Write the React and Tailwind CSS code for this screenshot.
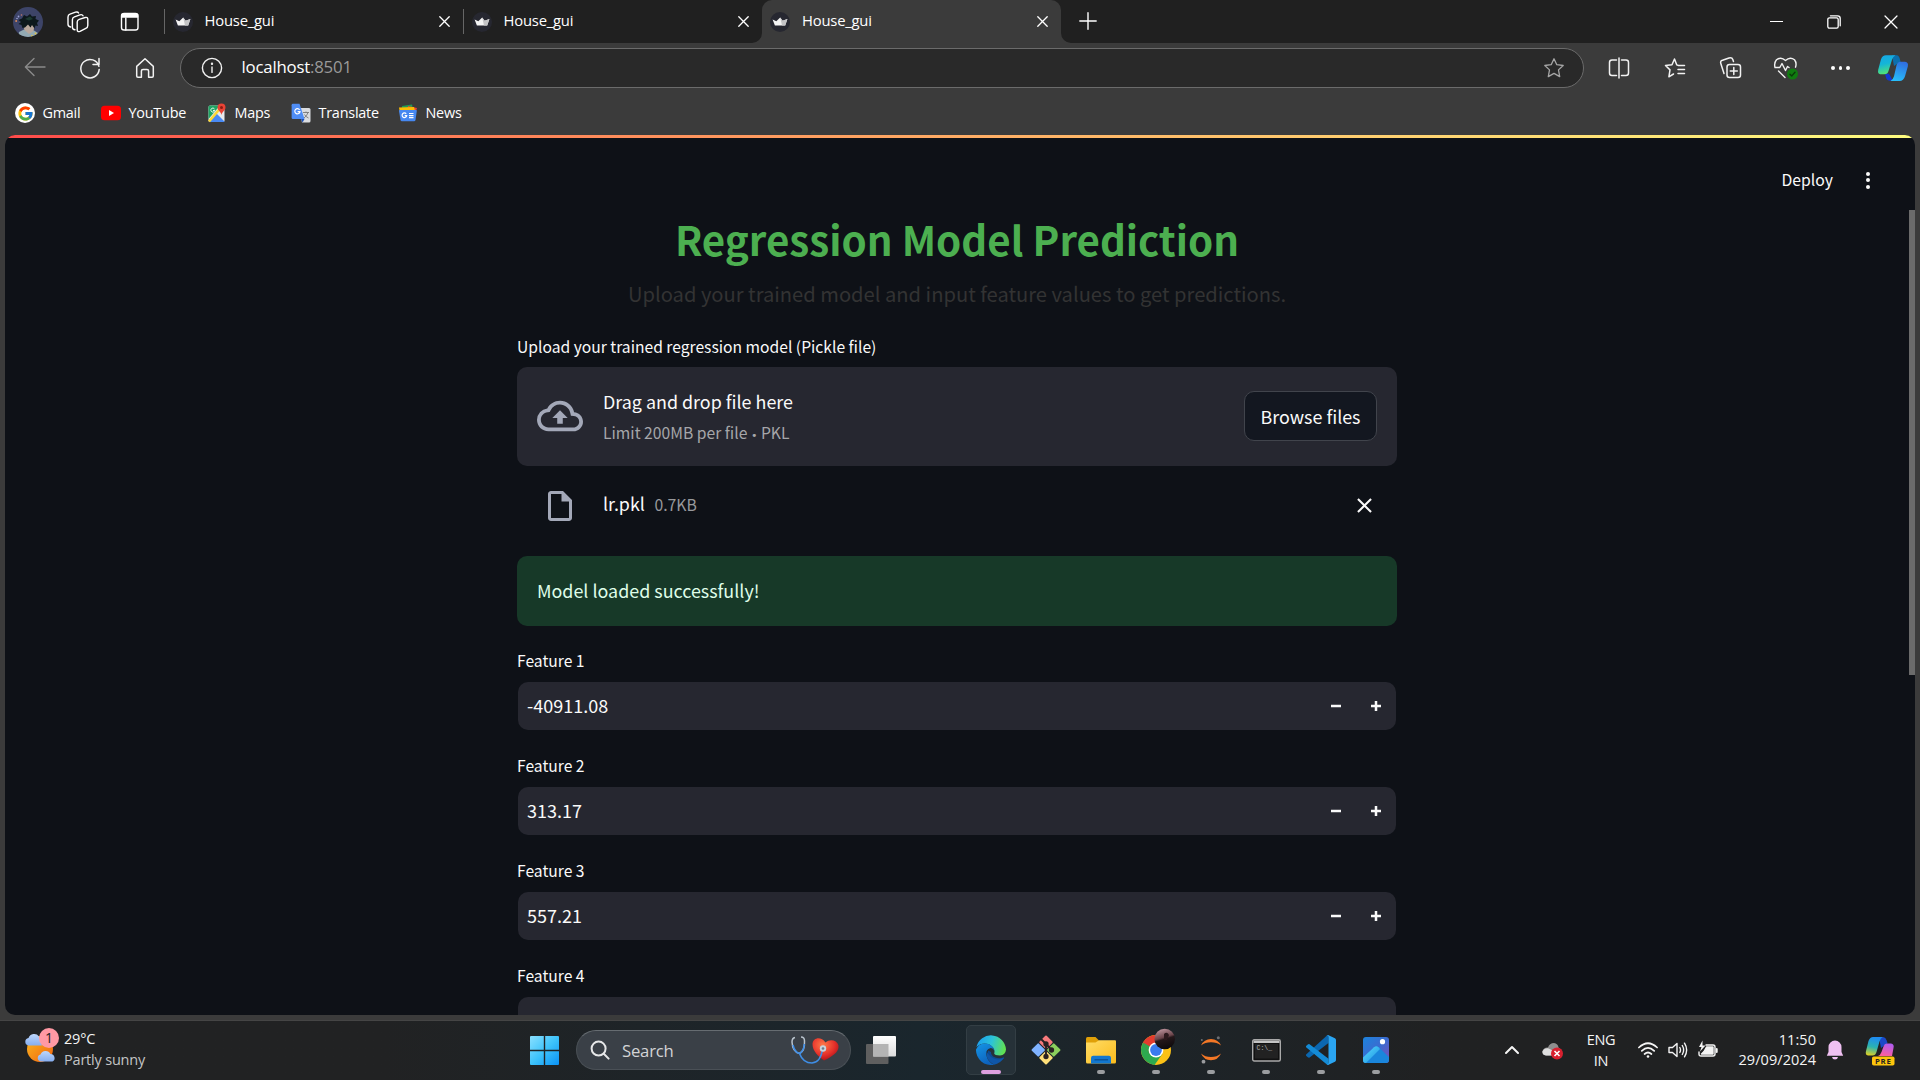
import { FcGoogle } from "react-icons/fc";

const UI = "font-['Open_Sans','Noto_Sans',sans-serif]";
const BODY = "font-['Noto_Sans_CJK_SC','Noto_Sans',sans-serif]";

const M = ({ className = "", children }) => <span className={`whitespace-nowrap ${className}`}>{children}</span>;

function Line({ size = 24, w = 1.3, children, className = "", box = "0 0 24 24" }) {
  return (
    <svg width={size} height={size} viewBox={box} fill="none" stroke="currentColor" strokeWidth={w} strokeLinecap="round" strokeLinejoin="round" className={`shrink-0 ${className}`}>
      {children}
    </svg>
  );
}

function Avatar() {
  return (
    <svg width="30" height="30" viewBox="0 0 30 30" className="shrink-0">
      <defs><clipPath id="av"><circle cx="15" cy="15" r="15" /></clipPath></defs>
      <g clipPath="url(#av)">
        <rect width="30" height="30" fill="#3d4468" />
        <path d="M5 30 6 25 11 22.500 21 23.500 25 26 26 30Z" fill="#93aab3" />
        <path d="M9.500 16 22 16 20.500 24 16 27 11.500 23Z" fill="#b9a89d" />
        <path d="M5.500 17 8 15 5.500 13 9 11.500 11 8 14 9.500 17 7 19 9.500 23 9 22.500 12 26 13.500 24 16 25 19 22.500 18.500 21.500 21.500 19 18 17.500 20.500 15 17.500 12 20.500 9.500 21 8.500 18Z" fill="#0d181c" />
        <path d="M12 12 17 9.500 20 12 16 13.500Z" fill="#1c3a31" />
        <circle cx="5.500" cy="9.500" r=".900" fill="#9aa0d6" /><circle cx="8.500" cy="8" r=".800" fill="#c07a6b" /><circle cx="3.200" cy="14" r="1" fill="#d88a5b" /><circle cx="4" cy="11.500" r=".700" fill="#b7bdf0" /><circle cx="22.500" cy="26.500" r=".900" fill="#e0c040" /><circle cx="19" cy="29" r=".900" fill="#e0c040" />
      </g>
    </svg>
  );
}

function Crown() {
  return (
    <svg width="20" height="20" viewBox="0 0 20 20" className="shrink-0">
      <circle cx="10" cy="10" r="10" fill="#262730" />
      <path d="M2.600 7.400 6.300 9.300 10.200 5.400 12.600 8.800 17.400 7 15.200 13.400H4.900Z" fill="#f4f4f4" />
      <path d="M10.200 5.400 12.600 8.800 17.400 7 15.200 13.400H12Z" fill="#c4c4c6" />
    </svg>
  );
}

const Cross = ({ size = 11, w = 1.3 }) => (
  <Line size={size} w={w} box="0 0 11 11"><path d="M.8.8 10.2 10.2M10.2.8.8 10.2" /></Line>
);

function Tab({ active, sep }) {
  return (
    <div className={`relative flex h-[43px] w-[299px] items-center ${active ? "rounded-t-[10px] bg-[#3b3b3b] pl-[8px] pr-[13px]" : "pl-[9.500px] pr-[12px]"}`}>
      {sep && <span className="absolute left-[1px] top-[9px] h-[25px] w-px bg-[#666]" />}
      {active && (
        <>
          <svg width="10" height="10" className="absolute -left-[10px] bottom-0"><path d="M10 0A10 10 0 0 1 0 10H10Z" fill="#3b3b3b" /></svg>
          <svg width="10" height="10" className="absolute -right-[10px] bottom-0"><path d="M0 0A10 10 0 0 0 10 10H0Z" fill="#3b3b3b" /></svg>
        </>
      )}
      <Crown />
      <M className="-mt-[4px] ml-[12px] text-[14.800px] leading-[20px] tracking-[-0.200px]">House_gui</M>
      <span className="ml-auto"><Cross /></span>
    </div>
  );
}

function TitleBar() {
  return (
    <div className="flex h-[43px] items-center bg-[#202020] text-white">
      <div className="flex w-[163px] items-center pl-[13px]">
        <Avatar />
        <Line size={22} w={1.4} box="0 0 22 22" className="ml-[24px]">
          <path d="M12.200 8.400 18.200 6.500Q20.800 5.900 20.800 8.300V14.500Q20.800 16.600 18.800 17.400L13 20.300Q10.200 21.300 10.200 18.700V11Q10.200 9 12.200 8.400ZM8 18.800Q5.400 18.600 5.400 16.200V8.700Q5.400 6.500 7.400 5.800L13 3.800Q15.300 3.100 16 4.800M3.600 16Q1 15.600 1 13.300V6Q1 3.900 3 3.200L8.500 1.200Q10.800.500 11.600 2" />
        </Line>
        <Line size={22} w={1.400} box="0 0 22 22" className="ml-[30px]">
          <rect x="2.500" y="2.500" width="16.500" height="16.500" rx="2.600" /><path d="M6.800 7V19" /><path d="M3 3.500H18.500V6H3Z" fill="currentColor" />
        </Line>
      </div>
      <Tab sep />
      <Tab sep />
      <span className="w-px" />
      <Tab active />
      <Line size={18} w={1.4} box="0 0 18 18" className="-mt-px ml-[18px]"><path d="M9 .8V17.2M.8 9H17.2" /></Line>
      <div className="ml-auto flex items-center">
        <div className="flex w-[57.500px] justify-center"><span className="h-px w-[13px] bg-white" /></div>
        <div className="flex w-[57.500px] justify-center">
          <Line size={14} w={1.3} box="0 0 14 14"><rect x=".8" y="2.800" width="10.400" height="10.400" rx="1.600" /><path d="M3.400.8H10.600Q13.200.8 13.200 3.400V10.800" /></Line>
        </div>
        <div className="flex w-[57.500px] justify-center"><Cross size={14} w={1} /></div>
      </div>
    </div>
  );
}

const Cell = ({ children, className = "w-[55px]" }) => <div className={`flex shrink-0 items-center justify-center ${className}`}>{children}</div>;

function CopilotEdge() {
  return (
    <svg width="32" height="34" viewBox="0 0 32 28" preserveAspectRatio="none" className="shrink-0">
      <defs>
        <linearGradient id="ca" x1="0" y1="0" x2=".2" y2="1"><stop offset="0" stopColor="#17a6e6" /><stop offset=".5" stopColor="#14b5d8" /><stop offset="1" stopColor="#4fe07a" /></linearGradient>
        <linearGradient id="cb" x1=".6" y1="0" x2=".3" y2="1"><stop offset="0" stopColor="#2f6fe0" /><stop offset="1" stopColor="#27c0fb" /></linearGradient>
      </defs>
      <g transform="translate(0 2.800) scale(1 .8)">
        <path d="M15 1H20Q22.500 1.500 23.500 7.500L17 12Z" fill="#0b6fae" />
        <path d="M8 20H12L16 27H13Q10 27 9 24Z" fill="#1238cf" />
        <path d="M9 .8H18.500Q16 1.800 15 5.500L11.500 17Q10.600 20.300 7.500 20.400H3.200Q.4 20.200 1.200 15.800L4 5Q5.400.8 9 .8Z" fill="url(#ca)" />
        <path d="M22.800 7.600H28Q31.800 8 30.800 12.500L28 22.500Q26.600 27.200 22.500 27.400H13.500Q16 26 17 22.500L19.600 11Q20.400 7.800 22.800 7.600Z" fill="url(#cb)" />
      </g>
    </svg>
  );
}

function Toolbar() {
  return (
    <div className="flex h-[50px] items-center bg-[#3b3b3b] pl-[7.500px] text-[#f2f2f2]">
      <Cell className="-mt-[2px] w-[55px] text-[#8a8a8a]"><Line size={22} w={1.4} box="0 0 22 22"><path d="M21 11H1.500M10 2.400 1.400 11 10 19.600" /></Line></Cell>
      <Cell className="-mt-px w-[55px]"><Line size={22} w={1.5} box="0 0 22 22"><path d="M19.900 9.200A9.200 9.200 0 1 0 20.200 12.400M20 1.600V7.400H14" /></Line></Cell>
      <Cell className="-mt-px w-[55px]"><Line size={22} w={1.5} box="0 0 22 22"><path d="M2.700 9.400 11 1.800 19.300 9.400V19Q19.300 20.200 18.100 20.200H14.600V14Q14.600 12.400 13 12.400H9Q7.400 12.400 7.400 14V20.200H3.900Q2.700 20.200 2.700 19Z" /></Line></Cell>
      <div className="ml-[7.500px] flex h-[40px] w-[1404px] shrink-0 items-center rounded-full border border-[#6b6b6b] bg-[#292929] pl-[20px] pr-[18px]">
        <Line size={22} w={1.4} box="0 0 22 22"><circle cx="11" cy="11" r="9.600" /><path d="M11 10V15.400" /><circle cx="11" cy="6.800" r=".5" fill="currentColor" /></Line>
        <M className="-mt-[2px] ml-[18.500px] text-[16.800px] leading-[22px] tracking-[-0.200px] text-white">localhost</M>
        <M className="-mt-[2px] text-[16.800px] leading-[22px] tracking-[-0.200px] text-[#9a9a9a]">:8501</M>
        <Line size={22} w={1.3} box="0 0 22 22" className="ml-auto text-[#a6a6a6]"><path d="M11 1.800 13.800 7.700 20.200 8.500 15.500 12.900 16.700 19.600 11 16.400 5.300 19.600 6.500 12.900 1.800 8.500 8.200 7.700Z" /></Line>
      </div>
      <div className="ml-[7.500px] flex items-center">
        <Cell><Line size={22} w={1.5} box="0 0 22 22"><path d="M8.500 3H4Q1.500 3 1.500 5.500V16Q1.500 18.500 4 18.500H8.500M13.500 3H18Q20.500 3 20.500 5.500V16Q20.500 18.500 18 18.500H13.500M11 1V21" /></Line></Cell>
        <Cell className="w-[56px]"><Line size={22} w={1.5} box="0 0 22 22"><path d="M20.500 8.500H14.500L12.800 7.900 10.500 2 8 7.700 1.500 8.500 6 12.900 4.900 19.800 9.500 17M14 12.500H20.500M14 16.500H20.500" /></Line></Cell>
        <Cell><Line size={24} w={1.5} box="0 0 24 24"><rect x="9" y="8.500" width="13.500" height="13" rx="2.500" /><path d="M15.800 11.500V18.500M12.300 15H19.300M6 17.500 2.800 7.500Q2 5 4.500 4.300L11 2Q14 1.200 14.800 3.500L15.500 5.500" /></Line></Cell>
        <Cell className="w-[56px]">
          <Line size={26} w={1.4} box="0 0 26 26"><path d="M2 12.500Q.800 8 3.500 4.800 8 1.200 12.500 5.500 17 1.200 21.500 4.800 24 8 22.500 12.200M2.500 12.500H6.800L9 8.500 12.500 15.500 14.500 11.500 16 12.500M5.500 16 12 22.500" /><circle cx="19.500" cy="19" r="5.500" fill="#107c10" stroke="none" /><path d="M17 19.200 18.800 20.900 22 17.300" stroke="#0a3a0a" /></Line>
        </Cell>
        <Cell className="w-[54px] gap-[4px]">{[0, 1, 2].map((i) => <span key={i} className="size-[3.400px] rounded-full bg-white" />)}</Cell>
        <Cell className="w-[51px]"><CopilotEdge /></Cell>
      </div>
    </div>
  );
}

const YT = () => <svg width="20" height="16" viewBox="0 0 20 16"><rect y=".800" width="20" height="14.400" rx="3.500" fill="#f00" /><path d="M8 5V11L13 8Z" fill="#fff" /></svg>;
const MapsIcon = () => (
  <svg width="18" height="20" viewBox="0 0 18 20">
    <rect x=".500" y="2.500" width="16" height="16.500" rx="1.500" fill="#e8eaed" />
    <path d="M.500 4Q.500 2.500 2 2.500H12L.500 16Z" fill="#1fa463" />
    <path d="M1 18 8.500 10.500 16.500 18.500Q16 19 15 19H2Q1 19 1 18Z" fill="#4889f4" />
    <path d="M1 18.500 12.500 5" stroke="#fdd835" strokeWidth="2.600" />
    <path d="M13.500 .500A4 4 0 0 1 17.500 4.500C17.500 7.500 14 8.500 13.500 12 13 8.500 9.500 7.500 9.500 4.500A4 4 0 0 1 13.500 .500Z" fill="#ea4335" /><circle cx="13.500" cy="4.500" r="1.500" fill="#8c1d14" />
    <path d="M6.500 6A2 2 0 1 0 6.800 7.500H5" stroke="#fff" fill="none" strokeWidth=".900" />
  </svg>
);
const TranslateIcon = () => (
  <svg width="20" height="20" viewBox="0 0 20 20">
    <path d="M8 5H18Q19.500 5 19.500 6.500V18Q19.500 19.500 18 19.500H11Z" fill="#dadce0" />
    <path d="M12 9.500H18M15 8.500V9.500M17 9.500Q16 13 13 15M13.500 11.500Q15 14 17.500 15" stroke="#777" fill="none" strokeWidth=".900" />
    <path d="M2 .800H8.500L13.500 16H2Q.600 16 .600 14.500V2.200Q.600.800 2 .800Z" fill="#4f8df5" /><path d="M10 16H13.500L11.500 19.500Z" fill="#1a4fb8" />
    <path d="M8.600 6.800A2.600 2.600 0 1 0 9 8.600H6.600" stroke="#fff" fill="none" strokeWidth="1.200" />
  </svg>
);
const NewsIcon = () => (
  <svg width="20" height="18" viewBox="0 0 20 18">
    <path d="M4 2 14 .500 15.500 8H4Z" fill="#1e9e55" /><path d="M10 2 19 4 17.500 9H9Z" fill="#ea4335" /><path d="M1 3.500 16 3 17.500 9H2Z" fill="#fbbc04" />
    <path d="M1.500 6H18Q19 6 18.800 7L17.500 16Q17.300 17.200 16 17.200H4Q2.700 17.200 2.500 16L1 7Q1 6 1.500 6Z" fill="#4688f1" />
    <path d="M8.200 9.800A2.300 2.300 0 1 0 8.700 11.600H6.700M11 9.500H15.500M11 11.600H15.500M11 13.700H15.500" stroke="#fff" fill="none" strokeWidth="1.200" />
  </svg>
);
const Gmail = () => <span className="grid size-[20px] place-items-center rounded-full bg-white"><FcGoogle size={17} /></span>;

function Bookmarks() {
  const items = [
    [Gmail, "Gmail", "w-[86px]"],
    [YT, "YouTube", "w-[106px]"],
    [MapsIcon, "Maps", "w-[84px]"],
    [TranslateIcon, "Translate", "w-[107px]"],
    [NewsIcon, "News", "w-[80px]"],
  ];
  return (
    <div className="flex h-[42px] items-center bg-[#3b3b3b] pb-[2px] pl-[15px] text-[14.400px] tracking-[-0.220px] text-white">
      {items.map(([Icon, t, w]) => (
        <div key={t} className={`flex items-center ${w}`}>
          <span className="flex w-[20px] justify-center"><Icon /></span>
          <M className="-mt-px ml-[7.500px] leading-[20px]">{t}</M>
        </div>
      ))}
    </div>
  );
}

function Feature({ n, value }) {
  return (
    <div>
      <div className="h-[24px] pt-px text-[15.650px] leading-[24px]"><M>Feature {n}</M></div>
      <div className="mx-px mt-[10px] flex h-[48px] items-center rounded-[10px] bg-[#262730] pl-[9px] text-[18px]">
        <M className="-mt-px">{value}</M>
        <div className="ml-auto flex h-[48px] items-center">
          <span className="flex w-[40px] justify-center"><svg width="10" height="10" viewBox="0 0 8 8" fill="#fafafa"><path d="M0 3v2h8V3z" /></svg></span>
          <span className="flex w-[40px] justify-center"><svg width="10" height="10" viewBox="0 0 8 8" fill="#fafafa"><path d="M3 0v3H0v2h3v3h2V5h3V3H5V0z" /></svg></span>
        </div>
      </div>
    </div>
  );
}

function Page() {
  return (
    <div className={`mx-[5px] h-[880px] overflow-hidden rounded-[10px] bg-[#0e1117] text-[#fafafa] ${BODY}`}>
      <div className="h-[3px] bg-linear-to-r from-[#ff4b4b] to-[#fffd80]" />
      <div className="flex h-[877px]">
        <div className="flex grow flex-col items-center">
          <div className="flex h-[84px] w-full shrink-0 items-center justify-end pr-[39.500px]">
            <M className="text-[15.750px] leading-[24px]">Deploy</M>
            <div className="ml-[32.500px] flex flex-col gap-[2.500px]">{[0, 1, 2].map((i) => <span key={i} className="size-[4px] rounded-full bg-[#fafafa]" />)}</div>
          </div>
          <div className="w-[880px]">
            <h1 className="h-[34px] text-center text-[40.300px] leading-[34px] font-bold text-[#4caf50]"><M>Regression Model Prediction</M></h1>
            <p className="mt-[23px] h-[30px] text-center text-[20.150px] leading-[30px] text-[#333]"><M>Upload your trained model and input feature values to get predictions.</M></p>
            <div className="mt-[26px] h-[24px] text-[15.650px] leading-[24px]"><M>Upload your trained regression model (Pickle file)</M></div>
            <div className="mt-[8px] flex h-[99px] items-center rounded-[10px] bg-[#262730] px-[20px] pb-[2px]">
              <svg width="46" height="46" viewBox="0 0 24 24" fill="#a3a8b8"><path d="M19.350 10.040A7.490 7.490 0 0 0 12 4C9.110 4 6.600 5.640 5.350 8.040A5.994 5.994 0 0 0 0 14c0 3.310 2.690 6 6 6h13c2.760 0 5-2.240 5-5 0-2.640-2.050-4.780-4.650-4.960zM19 18H6c-2.210 0-4-1.790-4-4 0-2.050 1.530-3.760 3.560-3.970l1.070-.110.500-.950A5.469 5.469 0 0 1 12 6c2.620 0 4.880 1.860 5.390 4.430l.300 1.500 1.530.110A2.980 2.980 0 0 1 22 15c0 1.650-1.350 3-3 3zM8 13h2.550v3h2.900v-3H16l-4-4-4 4z" /></svg>
              <div className="ml-[20px] mt-[5px] flex flex-col">
                <M className="text-[17.900px] leading-[30px]">Drag and drop file here</M>
                <M className="mb-[-2px] mt-px text-[15.700px] leading-[32px] text-[#a5a6a9]">Limit 200MB per file <span className="font-['DejaVu_Sans'] text-[11px]">•</span> PKL</M>
              </div>
              <button className="ml-auto h-[50px] w-[133px] rounded-[10px] border border-[#41444c] bg-[#131720] text-center text-[17.900px] leading-[46px]"><M>Browse files</M></button>
            </div>
            <div className="flex h-[80px] items-center pl-[25px] pr-[20px]">
              <svg width="36" height="36" viewBox="0 0 24 24" fill="#a3a8b8"><path d="M14 2H6c-1.100 0-2 .900-2 2v16c0 1.100.890 2 2 2h12c1.100 0 2-.900 2-2V8l-6-6zM6 20V4h7v5h5v11H6z" /></svg>
              <M className="-mt-[5px] ml-[25px] text-[17.900px]">lr.pkl</M>
              <M className="-mt-[3px] ml-[9.500px] text-[15.750px] text-[#98999c]">0.7KB</M>
              <svg width="25" height="25" viewBox="0 0 24 24" fill="#fafafa" className="-mt-px ml-auto"><path d="M19 6.410 17.590 5 12 10.590 6.410 5 5 6.410 10.590 12 5 17.590 6.410 19 12 13.410 17.590 19 19 17.590 13.410 12z" /></svg>
            </div>
            <div className="mt-[10px] flex h-[70px] items-center rounded-[10px] bg-[#173928] px-[20px] pb-[2px] text-[17.900px] text-[#dffde9]"><M>Model loaded successfully!</M></div>
            <div className="mt-[22px] flex flex-col gap-[23px]">
              <Feature n={1} value="-40911.08" />
              <Feature n={2} value="313.17" />
              <Feature n={3} value="557.21" />
              <Feature n={4} value="" />
            </div>
          </div>
        </div>
        <div className="mt-[72px] h-[465px] w-[6px] shrink-0 bg-[#6b6b6b]" />
      </div>
    </div>
  );
}

function Weather() {
  return (
    <svg width="34" height="36" viewBox="0 0 34 36">
      <defs><linearGradient id="sun" x1="0" y1="0" x2="1" y2="1"><stop offset="0" stopColor="#fbb91f" /><stop offset="1" stopColor="#f0620f" /></linearGradient>
        <linearGradient id="cl" x1="0" y1="0" x2="0" y2="1"><stop offset="0" stopColor="#bcd6fb" /><stop offset="1" stopColor="#86aef0" /></linearGradient></defs>
      <circle cx="15" cy="22" r="13" fill="url(#sun)" />
      <path d="M3.500 18.500A3.800 3.800 0 0 1 3.500 11 6 6 0 0 1 14 9.500L17 18.500Z" fill="url(#cl)" />
      <path d="M15.500 34.500A3.600 3.600 0 0 1 15.500 27.500 5.500 5.500 0 0 1 25.500 27 4 4 0 0 1 27.500 34.500Z" fill="url(#cl)" />
      <circle cx="24" cy="11" r="10" fill="#ff99a4" />
      <text x="24" y="16" textAnchor="middle" fontSize="14" fill="#222" fontFamily="Open Sans">1</text>
    </svg>
  );
}

const WinLogo = () => (
  <svg width="29" height="29" viewBox="0 0 29 29">
    <defs><linearGradient id="wl" gradientUnits="userSpaceOnUse" x1="0" y1="0" x2="29" y2="29"><stop offset="0" stopColor="#8ae0ff" /><stop offset=".500" stopColor="#3ec3fb" /><stop offset="1" stopColor="#0a92f5" /></linearGradient></defs>
    <g fill="url(#wl)"><path d="M1 0H13.800V13.800H0V1Q0 0 1 0ZM15.200 0H28Q29 0 29 1V13.800H15.200ZM0 15.200H13.800V29H1Q0 29 0 28ZM15.200 15.200H29V28Q29 29 28 29H15.200Z" /></g>
  </svg>
);

const Heart = () => (
  <svg width="50" height="30" viewBox="0 0 50 30">
    <defs><radialGradient id="hr" cx=".400" cy=".300" r=".750"><stop offset="0" stopColor="#ff7a4a" /><stop offset=".600" stopColor="#e5302a" /><stop offset="1" stopColor="#a80f18" /></radialGradient></defs>
    <path d="M34 25.500C28 21 22.500 16 22.500 9 23 2.500 31 1 35.500 7.500 40 3.500 47 5 48.500 10.500 49.500 17.500 41 22 34 25.500Z" fill="url(#hr)" />
    <path d="M5 2.500Q2 3 2 7 2.500 17 9.500 18.500 15 16 14.500 6 14.500 2 11 2" fill="none" stroke="#b9c3cd" strokeWidth="1.500" />
    <path d="M3 10Q4.500 17 9.500 18.500 14 16 14.300 9M9.500 18.500Q13 28 22 28 31 27 32.500 14" fill="none" stroke="#3f8ee6" strokeWidth="1.600" />
    <circle cx="33" cy="13.500" r="3.200" fill="#c9d3dd" /><circle cx="33" cy="13.500" r="1.300" fill="#6b7c8c" />
  </svg>
);

const TaskView = () => (
  <svg width="30" height="28" viewBox="0 0 30 28">
    <defs><linearGradient id="tv" x1="0" y1="0" x2="0" y2="1"><stop offset="0" stopColor="#fff" /><stop offset="1" stopColor="#dcdcdc" /></linearGradient></defs>
    <rect y="8" width="22.500" height="20" rx="1" fill="#5f5f5f" /><rect x="7" y="0" width="23" height="20.500" rx="1" fill="url(#tv)" /><path d="M7 8H22.500V20.500H7Z" fill="#b4b4b4" />
  </svg>
);

const EdgeLogo = () => (
  <svg width="30" height="30" viewBox="0 0 30 30">
    <defs>
      <linearGradient id="e1" x1="0" y1=".300" x2="1" y2=".500"><stop offset="0" stopColor="#1a9df0" /><stop offset=".500" stopColor="#2cc3d8" /><stop offset="1" stopColor="#62e24f" /></linearGradient>
      <linearGradient id="e2" x1="0" y1="0" x2=".500" y2="1"><stop offset="0" stopColor="#1596e6" /><stop offset="1" stopColor="#0d62bd" /></linearGradient>
    </defs>
    <path d="M12 15.500Q10.500 20 14 24 20 28.500 27 24 28.500 23 28 22.300 22 24.500 17 21.500 14.500 19.500 15 17Z" fill="#0c4a94" />
    <path d="M10.500 17Q9.500 25 18 29.700 24.500 28.500 28 22.800 21 26.500 15 22Z" fill="#0f56a8" />
    <path d="M.400 12A15 15 0 0 1 30 14.500Q29.500 20 24 20.500 18.500 20.500 18.200 18.600 18.500 17.500 18.500 16 18 12 13 9.300 6 7 .400 12Z" fill="url(#e1)" />
    <path d="M0 14.500Q3 7.500 10 8.500 17 9.500 18.500 16 17 12.500 14 13.200 9 15 10.500 21 12 27 18 29.700A15 15 0 0 1 0 14.500Z" fill="url(#e2)" />
  </svg>
);

const GitLogo = () => (
  <svg width="30" height="30" viewBox="0 0 30 30">
    <g transform="rotate(45 15 15)">
      <rect x="4.500" y="4.500" width="10" height="10" rx="1" fill="#f87a7c" /><rect x="15.500" y="4.500" width="10" height="10" rx="1" fill="#8ccf5c" />
      <rect x="4.500" y="15.500" width="10" height="10" rx="1" fill="#80b3ff" /><rect x="15.500" y="15.500" width="10" height="10" rx="1" fill="#ffe07a" />
    </g>
    <g stroke="#2a2222" strokeWidth="1.900" fill="#2a2222"><path d="M10 4 15 9V21M15 9 20.500 14.800" fill="none" /><circle cx="15" cy="9" r="1.700" /><circle cx="15" cy="21.500" r="1.700" /><circle cx="20.500" cy="15" r="1.700" /></g>
  </svg>
);

const Folder = () => (
  <svg width="30" height="27" viewBox="0 0 30 27">
    <defs><linearGradient id="fo" x1="0" y1="0" x2="1" y2="1"><stop offset="0" stopColor="#ffdc66" /><stop offset="1" stopColor="#fbbc1c" /></linearGradient></defs>
    <path d="M0 1.500Q0 0 1.500 0H9.500L13 3.500V8H0Z" fill="#e0a008" /><path d="M0 5.500H9.500L13 3.200H29Q30 3.200 30 4.500V25Q30 26.500 28.500 26.500H1.500Q0 26.500 0 25Z" fill="url(#fo)" />
    <path d="M5 26.500V21Q5 18.800 7.200 18.800H22.800Q25 18.800 25 21V26.500Z" fill="#1277cf" /><path d="M8.500 22.800H22" stroke="#0a4f93" strokeWidth="1.300" />
  </svg>
);

const ChromeLogo = () => (
  <svg width="38" height="38" viewBox="0 0 38 38" className="-mt-[8px]">
    <g transform="translate(4 4)">
      <circle cx="15" cy="19" r="15" fill="#fbc116" />
      <path d="M15 19 2 11.500A15 15 0 0 0 13.500 33.900L21.500 22.700Z" fill="#2da94f" />
      <path d="M2 11.500A15 15 0 0 1 28 11.500H15L8.600 22.700Z" fill="#e33b2e" />
      <path d="M2 11.500 8.500 22.700 15 19Z" fill="#2da94f" />
      <circle cx="15" cy="19" r="7.400" fill="#fff" /><circle cx="15" cy="19" r="5.900" fill="#3a7bee" />
    </g>
    <defs><linearGradient id="cp" x1=".200" y1="0" x2=".500" y2="1"><stop offset="0" stopColor="#c49aa4" /><stop offset=".450" stopColor="#6b454b" /><stop offset=".550" stopColor="#24171a" /><stop offset="1" stopColor="#0d0a0c" /></linearGradient></defs>
    <circle cx="27.700" cy="12" r="10.300" fill="url(#cp)" /><path d="M27 7Q30 4 32 8L30 13H27Z" fill="#2d1a1e" />
  </svg>
);

const Jupyter = () => (
  <svg width="22" height="30" viewBox="0 0 22 30">
    <path d="M1 10.500Q4 4 11 4 18 4 21 10.500 17 7.200 11 7.200 5 7.200 1 10.500ZM1 18.500Q5 22 11 22 17 22 21 18.500 18 25.200 11 25.200 4 25.200 1 18.500Z" fill="#f37726" />
    <circle cx="18.300" cy="2.800" r="1.500" fill="#6d6e71" /><circle cx="3.500" cy="26.700" r="1.900" fill="#9a9b9e" /><circle cx="1.800" cy="5" r="1" fill="#6d6e71" />
  </svg>
);

const Cmd = () => (
  <svg width="29" height="23" viewBox="0 0 29 23">
    <rect x=".700" y=".700" width="27.600" height="21.300" rx="1.500" fill="#111" stroke="#a9a9a9" strokeWidth="1.400" /><path d="M1.500 1.500H27.500V4H1.500Z" fill="#c4c4c4" /><rect x="3" y="5" width="23" height="14.500" fill="#222" />
    <text x="4.500" y="10.500" fontSize="6.500" fill="#b5b5b5" fontFamily="Liberation Mono">C:\_</text>
  </svg>
);

const VSCode = () => (
  <svg width="30" height="30" viewBox="0 0 100 100">
    <path d="M1.200 64 69 2.500 75 0V27L12 75Q9 77 6 74.500L1.200 70Q-1.500 67 1.200 64Z" fill="#0b67b0" />
    <path d="M1.200 36 6 31.500Q9 29 12 31L75 79V99Q71 100 68.500 97.500L1.200 42Q-1.500 39 1.200 36Z" fill="#148bd6" />
    <path d="M75 .500 96.500 11Q100 13 100 17V83Q100 87 96.500 89L75 99.500Q71 100.500 68.500 97.500 75 100 75 92V8Q75 0 68.500 2.500 71-1 75 .500Z" fill="#2aa5f2" />
  </svg>
);

const Photos = () => (
  <svg width="26" height="26" viewBox="0 0 26 26">
    <defs><linearGradient id="ph" x1="0" y1="0" x2="1" y2="1"><stop offset="0" stopColor="#1b84dd" /><stop offset=".500" stopColor="#3c6bd0" /><stop offset="1" stopColor="#7e4fb8" /></linearGradient>
      <linearGradient id="pm" x1="0" y1="0" x2="1" y2="1"><stop offset="0" stopColor="#59dcff" /><stop offset="1" stopColor="#1b8fe0" /></linearGradient></defs>
    <rect width="26" height="26" rx="3" fill="url(#ph)" /><path d="M0 23 12 10.500Q14 8.500 16 10.500L26 20V23Q26 26 23 26H3Q0 26 0 23Z" fill="#1a86dc" /><path d="M0 20.500 11 10.300Q13.300 8.200 15.500 10.300L17 12 3 26Q0 26 0 23Z" fill="url(#pm)" />
    <circle cx="19.500" cy="4.700" r="2.600" fill="#fff" />
  </svg>
);

function TaskApp({ children, mark = "bottom-px w-[8px] bg-[#9b9da0]", className = "" }) {
  return (
    <div className={`relative flex h-[50px] w-[50px] items-center justify-center rounded-[5px] ${className}`}>
      {children}
      <span className={`absolute h-[4px] rounded-full ${mark}`} />
    </div>
  );
}

const CopilotPre = () => (
  <svg width="30" height="30" viewBox="0 0 30 30">
    <defs><linearGradient id="p1" x1=".300" y1="0" x2=".100" y2="1"><stop offset="0" stopColor="#1f8df0" /><stop offset=".500" stopColor="#2bb3b0" /><stop offset="1" stopColor="#ead21a" /></linearGradient>
      <linearGradient id="p2" x1=".600" y1="0" x2=".300" y2="1"><stop offset="0" stopColor="#b05cf0" /><stop offset="1" stopColor="#ff5f9a" /></linearGradient></defs>
    <path d="M14 1H18Q21 1 22.500 7L16 12Z" fill="#1a49c8" />
    <path d="M8 1H17.500Q15.500 2 14.500 5.500L11.500 16Q10.500 19.500 7.500 19.500H3Q0 19 1 15L3.500 5Q5 1 8 1Z" fill="url(#p1)" />
    <path d="M21.500 7.500H26Q29.500 8 28.500 12L27 20H13Q15.500 19 16.500 16L18.500 10.500Q19.500 7.500 21.500 7.500Z" fill="url(#p2)" />
    <rect x="7" y="20.500" width="22.500" height="9" rx="1.800" fill="#fdc50c" />
    <text x="18.300" y="27.900" textAnchor="middle" fontSize="7.800" fontWeight="700" letterSpacing=".8" fill="#222" fontFamily="Open Sans">PRE</text>
  </svg>
);

function Taskbar() {
  return (
    <div className="mt-[5px] flex h-[60px] border-t border-[#454545] bg-linear-to-r from-[#212223] from-20% via-[#1a262d] via-48% to-[#202122] to-75% text-[#f4f4f4]">
      <div className="flex w-[530px] items-start pl-[25px] pt-[6px]">
        <Weather />
        <div className="ml-[5px] mt-[2px] flex flex-col text-[14.500px] leading-[20.500px] tracking-[-0.200px]"><M>29°C</M><M className="text-[#c4c5c6]">Partly sunny</M></div>
      </div>
      <div className="flex h-[58px] items-center">
        <WinLogo />
        <div className="ml-[17px] flex h-[40px] w-[275px] items-center rounded-full border border-[#4a5056] border-t-[#666c71] bg-[#3a4047] pl-[14px] pr-[10px]">
          <Line size={20} w={2} box="0 0 20 20" className="-ml-[1px] text-[#e6e7e8]"><circle cx="8.600" cy="8.600" r="7" /><path d="M13.800 13.800 18.600 18.600" /></Line>
          <M className="ml-[12px] mt-[1px] text-[16.700px] tracking-[-0.200px] text-[#d3d4d6]">Search</M>
          <span className="ml-auto"><Heart /></span>
        </div>
        <span className="ml-[15px]"><TaskView /></span>
        <div className="ml-[70px] flex items-center gap-[5px]">
          <TaskApp className="border border-[#333e44] bg-[#263138]" mark="bottom-0 w-[20px] bg-[#dd9fdf]"><EdgeLogo /></TaskApp>
          <TaskApp mark="hidden"><GitLogo /></TaskApp>
          <TaskApp><Folder /></TaskApp>
          <TaskApp><ChromeLogo /></TaskApp>
          <TaskApp><Jupyter /></TaskApp>
          <TaskApp><Cmd /></TaskApp>
          <TaskApp><VSCode /></TaskApp>
          <TaskApp><Photos /></TaskApp>
        </div>
      </div>
      <div className="ml-auto flex h-[58px] items-center text-[14.500px] leading-[20.500px] tracking-[-0.300px]">
        <Line size={14} w={2} box="0 0 14 14"><path d="M1 10 7 4 13 10" /></Line>
        <svg width="22" height="18" viewBox="0 0 22 18" className="ml-[23px] mt-[2px]"><path d="M4 13.500Q0 13 .500 9 2 5 6 5.500 7.500 1 12 1 16 1.500 16.500 5.500 19 6.500 19 9V13.500Z" fill="#8e8e8e" /><path d="M4 13.500Q0 13 .500 9.500 2 6 6 6.200L16 11V13.500Z" fill="#dedede" /><circle cx="15" cy="11.500" r="6" fill="#d8202f" /><path d="M12.500 9 17.500 14M17.500 9 12.500 14" stroke="#fff" strokeWidth="1.600" /></svg>
        <div className="ml-[22px] mt-px flex w-[30px] flex-col items-center"><M>ENG</M><M>IN</M></div>
        <Line size={20} w={1.700} box="0 0 20 20" className="ml-[22px]"><path d="M.900 7.500Q10-1 19.100 7.500M3.800 10.800Q10 5 16.200 10.800M6.600 14Q10 11 13.400 14" /><circle cx="10" cy="16.500" r="1.300" fill="currentColor" stroke="none" /></Line>
        <Line size={20} w={1.400} box="0 0 20 20" className="ml-[10px]"><path d="M1 7.500H4.500L9 3.500V16.500L4.500 12.500H1ZM11.800 7.500Q13.200 10 11.800 12.500M14.300 5.500Q17 10 14.300 14.500M16.500 3.200Q20.800 10 16.500 16.800" /></Line>
        <Line size={20} w={1.400} box="0 0 20 20" className="ml-[10px]"><path d="M8 5H15Q17 5 17 7V14Q17 16 15 16H3Q1 16 1 14V12" /><path d="M8.500 7H15V14H3.500L6 11.500Z" fill="currentColor" /><path d="M18.700 9V12" strokeWidth="2" /><path d="M4.500.500 1 7H3.500L2 11.500 7.500 5.500H4.500Z" fill="currentColor" stroke="none" /></Line>
        <div className="ml-[20px] flex w-[78px] flex-col items-end tracking-[0.050px]"><M>11:50</M><M>29/09/2024</M></div>
        <svg width="18" height="20" viewBox="0 0 18 20" className="ml-[10px]" fill="#f0c0f2"><path d="M9 .500A6.500 6.500 0 0 1 15.500 7V12L17.200 15.800H.800L2.500 12V7A6.500 6.500 0 0 1 9 .500ZM6 17H12Q11.500 19.500 9 19.500 6.500 19.500 6 17Z" /></svg>
        <span className="ml-[21px] mr-[25px] mt-[2px]"><CopilotPre /></span>
      </div>
    </div>
  );
}

export default function App() {
  return (
    <div className={`h-[1080px] w-[1920px] overflow-hidden bg-[#3b3b3b] ${UI}`}>
      <TitleBar />
      <Toolbar />
      <Bookmarks />
      <Page />
      <Taskbar />
    </div>
  );
}
